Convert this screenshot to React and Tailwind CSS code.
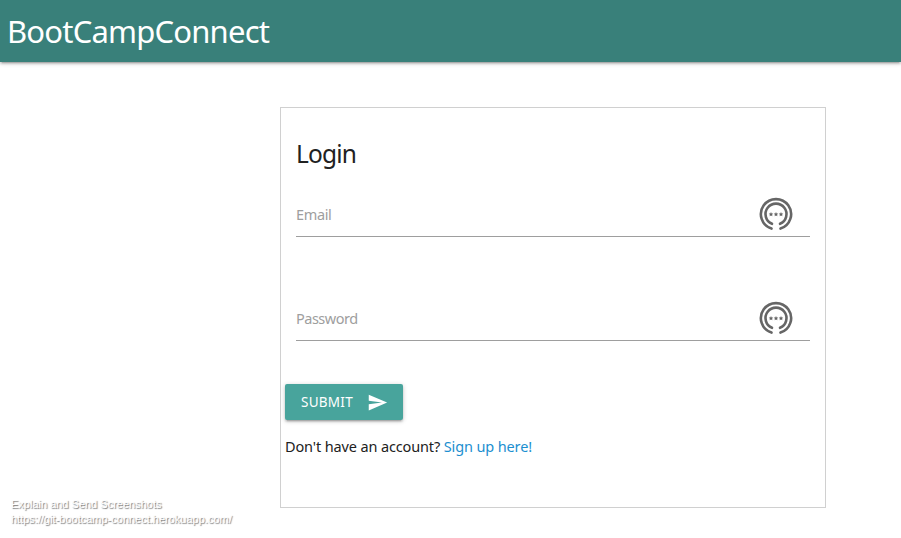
const STAR = "M0-2.3L.7-.9 2.2-.7 1.1.4 1.4 1.9 0 1.1-1.4 1.9-1.1.4-2.2-.7-.7-.9Z";

function KeyRing() {
  return (
    <svg className="mr-[17px] h-[34px] w-[34px] shrink-0" viewBox="0 0 34 34" fill="none" stroke="#666" strokeWidth="2.6" strokeLinecap="round">
      <path d="M12.5 31.6A15.1 15.1 0 1 1 21.5 31.6" />
      <path d="M13 26.8A10.5 10.5 0 1 1 21 26.8" />
      <g fill="#666" stroke="none">
        <path d={STAR} transform="translate(12 17.3)" />
        <path d={STAR} transform="translate(17 17.3)" />
        <path d={STAR} transform="translate(22 17.3)" />
      </g>
    </svg>
  );
}

function Field({ label, className }) {
  return (
    <div className="flex h-[45px] items-center justify-between border-b border-[#9e9e9e] text-[#9e9e9e]">
      <span className={`pt-0.5 text-[14.5px] whitespace-nowrap ${className}`}>{label}</span>
      <KeyRing />
    </div>
  );
}

export default function App() {
  return (
    <div className="flex h-[538px] w-[901px] flex-col overflow-hidden bg-white font-['Noto_Sans','Open_Sans',sans-serif]">
      <header className="flex h-[62px] shrink-0 items-center bg-[#39807a] pl-[7px] text-white shadow-[0_2px_2px_0_rgba(0,0,0,0.14),0_3px_1px_-2px_rgba(0,0,0,0.12),0_1px_5px_0_rgba(0,0,0,0.2)]">
        <h1 className="text-[31px] leading-[62px] tracking-[-0.8px]">BootCampConnect</h1>
      </header>
      <main className="mt-[45px] ml-[280px] h-[401px] w-[546px] shrink-0 border border-[#d0d0d0]">
        <div className="px-[15px]">
          <h2 className="pt-[28px] text-[24.5px] leading-[36px] tracking-[-0.8px] text-[#212121]">Login</h2>
          <div className="mt-[20px]">
            <Field label="Email" className="tracking-[-0.35px]" />
          </div>
          <div className="mt-[59px]">
            <Field label="Password" className="tracking-[-0.5px]" />
          </div>
        </div>
        <div className="pl-1">
          <button className="mt-[43px] flex h-9 w-[118px] items-center rounded-[2px] bg-[#48a49c] pl-4 text-white shadow-[0_2px_2px_0_rgba(0,0,0,0.14),0_3px_1px_-2px_rgba(0,0,0,0.12),0_1px_5px_0_rgba(0,0,0,0.2)]">
            <span className="w-[66px] text-left text-[13.5px] tracking-[0.25px]">SUBMIT</span>
            <svg className="h-[21px] w-[21px]" viewBox="0 0 24 24" fill="currentColor">
              <path d="M2.01 21L23 12 2.01 3 2 10l15 2-15 2z" />
            </svg>
          </button>
          <p className="mt-[14px] text-[14.5px] leading-[24px] tracking-[-0.13px] whitespace-nowrap text-[#212121]">
            Don't have an account? <a className="text-[#1c8fd0]">Sign up here!</a>
          </p>
        </div>
      </main>
      <footer className="mt-[-11px] pl-[11px] font-['Liberation_Sans',sans-serif] text-[11px] leading-[15px] text-white [text-shadow:1px_1px_1px_#777]">
        <p>Explain and Send Screenshots</p>
        <p>https://git-bootcamp-connect.herokuapp.com/</p>
      </footer>
    </div>
  );
}
